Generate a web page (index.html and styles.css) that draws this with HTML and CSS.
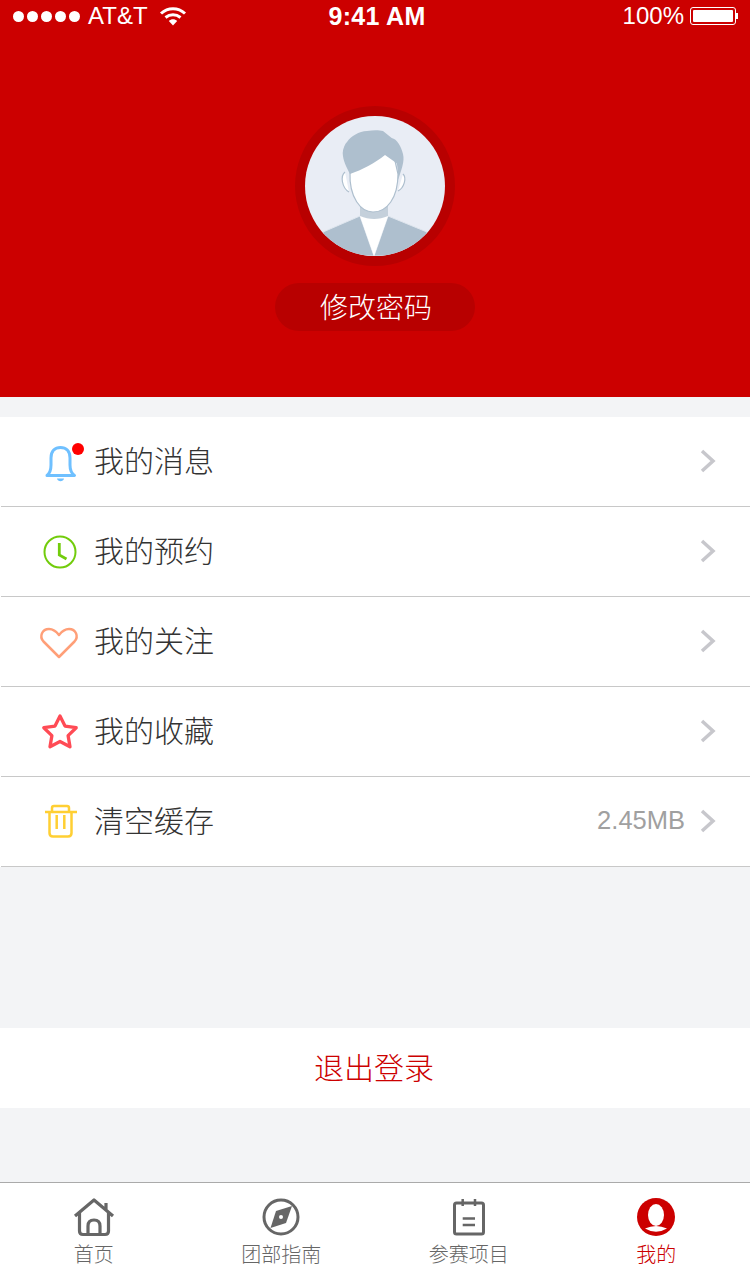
FILE: index.html
```html
<!DOCTYPE html>
<html lang="zh-CN">
<head>
    <meta charset="UTF-8">
    <meta name="viewport" content="width=device-width, initial-scale=1.0">
    <title>我的</title>
    <link rel="stylesheet" href="styles.css">
</head>
<body>

    <header class="profile">
        <div class="status-bar">
            <div class="status-left">
                <span class="signal"><i></i><i></i><i></i><i></i><i></i></span>
                <span class="carrier">AT&amp;T</span>
                <svg class="wifi" width="28" height="20" viewBox="0 0 28 20">
                    <path d="M2 7.5C9 1 19 1 26 7.5" fill="none" stroke="#fff" stroke-width="3"/>
                    <path d="M6.5 11.5C11 7.8 17 7.8 21.5 11.5" fill="none" stroke="#fff" stroke-width="3"/>
                    <path d="M9.8 15L14 19.5L18.2 15C15.8 12.8 12.2 12.8 9.8 15Z" fill="#fff"/>
                </svg>
            </div>
            <div class="status-time">9:41 AM</div>
            <div class="status-right">
                <span>100%</span>
                <span class="battery"><b></b></span>
                <span class="battery-tip"></span>
            </div>
        </div>

        <div class="avatar-ring">
            <svg class="avatar" width="140" height="140" viewBox="0 0 140 140">
                <rect width="140" height="140" fill="#e9edf5"/>
                <path d="M18 116L55 100L69 140L83 100L122 116L122 140L18 140Z" fill="#aebfce" stroke="#dfe6ee" stroke-width="1"/>
                <path d="M55 100L83 100L69 140Z" fill="#fff"/>
                <path d="M55 90V100C64 104 74 104 83 100V90Z" fill="#c4d0db"/>
                <path d="M40 56C35 60 37 72 44 76" fill="#fff" stroke="#aebfce" stroke-width="1.2"/>
                <path d="M98 58C102 62 99 72 93 75" fill="#fff" stroke="#aebfce" stroke-width="1.2"/>
                <path d="M45 56C44 82 56 96 68 96C82 96 93 82 93 58L88 36L50 44Z" fill="#fff" stroke="#aebfce" stroke-width="1.2"/>
                <path d="M45 58C41 50 38 45 37.7 37C38 32 40 28 42 26C46 20 54 15.500 62 15C68 14 74 14 78 15L86.700 22C92 23 96 30 98 38C100 46 96 54 93.300 64C93 56 92.500 50 91.700 47.300L80 39C70 47 57 54 45 58Z" fill="#aebfce"/>
            </svg>
        </div>

        <a class="pill">修改密码</a>
    </header>

    <ul class="menu">
        <li class="menu-row">
            <svg class="menu-icon" width="60" height="60" viewBox="0 0 60 60">
                <path d="M17 43.5C20 41 21 38 21 33V26C21 19 25 15.5 30.5 15.5C36 15.5 40 19 40 26V33C40 38 41 41 44.500 43.500Z" fill="none" stroke="#6fc0ff" stroke-width="3" stroke-linejoin="round"/>
                <path d="M27 46.500H34C33.500 50 27.500 50 27 46.500Z" fill="#6fc0ff"/>
                <circle cx="48" cy="17" r="6" fill="#f00"/>
            </svg>
            <span class="menu-label">我的消息</span>
            <svg class="chevron" width="16" height="24" viewBox="0 0 16 24"><path d="M2 2L13 12L2 22" fill="none" stroke="#c7c7cc" stroke-width="3.500"/></svg>
        </li>
        <li class="menu-row">
            <svg class="menu-icon" width="60" height="60" viewBox="0 0 60 60">
                <circle cx="30" cy="30" r="15.500" fill="none" stroke="#72cc0c" stroke-width="2"/>
                <path d="M29.300 21V33L36.500 37" fill="none" stroke="#72cc0c" stroke-width="2.800"/>
            </svg>
            <span class="menu-label">我的预约</span>
            <svg class="chevron" width="16" height="24" viewBox="0 0 16 24"><path d="M2 2L13 12L2 22" fill="none" stroke="#c7c7cc" stroke-width="3.500"/></svg>
        </li>
        <li class="menu-row">
            <svg class="menu-icon" width="60" height="60" viewBox="0 0 60 60">
                <path d="M29 45L13.500 29.500C9 24.500 12 17 19 17C23 17 26 19 29 23C32 19 35 17 39 17C46 17 49 24.500 44.500 29.500Z" fill="none" stroke="#ff9f78" stroke-width="2.500" stroke-linejoin="round"/>
            </svg>
            <span class="menu-label">我的关注</span>
            <svg class="chevron" width="16" height="24" viewBox="0 0 16 24"><path d="M2 2L13 12L2 22" fill="none" stroke="#c7c7cc" stroke-width="3.500"/></svg>
        </li>
        <li class="menu-row">
            <svg class="menu-icon" width="60" height="60" viewBox="0 0 60 60">
                <path d="M30 14L35 24.100L46.200 25.700L38.100 33.600L40 44.800L30 39.500L20 44.800L21.900 33.600L13.800 25.700L25 24.100Z" fill="none" stroke="#ff4b55" stroke-width="3.300" stroke-linejoin="round"/>
            </svg>
            <span class="menu-label">我的收藏</span>
            <svg class="chevron" width="16" height="24" viewBox="0 0 16 24"><path d="M2 2L13 12L2 22" fill="none" stroke="#c7c7cc" stroke-width="3.500"/></svg>
        </li>
        <li class="menu-row">
            <svg class="menu-icon" width="60" height="60" viewBox="0 0 60 60">
                <path d="M15 20H47M22 19V16Q22 14 24 14H37Q39 14 39 16V19M19.500 20V41Q19.500 44.500 23 44.500H38Q41.500 44.500 41.500 41V20M26.700 23V37M34.300 23V37" fill="none" stroke="#ffcf33" stroke-width="2.500"/>
            </svg>
            <span class="menu-label">清空缓存</span>
            <span class="menu-value">2.45MB</span>
            <svg class="chevron" width="16" height="24" viewBox="0 0 16 24"><path d="M2 2L13 12L2 22" fill="none" stroke="#c7c7cc" stroke-width="3.500"/></svg>
        </li>
    </ul>

    <button class="logout">退出登录</button>

    <nav class="tabbar">
        <a class="tab">
            <svg width="50" height="44" viewBox="0 0 50 44">
                <path d="M6 21L25 5L44 21M37 8V15M10.500 18V36Q10.500 39.500 14 39.500H36Q39.500 39.500 39.500 36V18M19 39V31Q19 25 25 25Q31 25 31 31V39" fill="none" stroke="#666" stroke-width="3.200" stroke-linejoin="round"/>
            </svg>
            <span>首页</span>
        </a>
        <a class="tab">
            <svg width="50" height="44" viewBox="0 0 50 44">
                <circle cx="25" cy="22" r="17" fill="none" stroke="#666" stroke-width="3"/>
                <path d="M36 11L30 28L14.500 33L20 16Z" fill="#666"/>
                <circle cx="25" cy="22" r="2" fill="#fff"/>
            </svg>
            <span>团部指南</span>
        </a>
        <a class="tab">
            <svg width="50" height="44" viewBox="0 0 50 44">
                <rect x="10.500" y="8" width="29" height="31" rx="2" fill="none" stroke="#666" stroke-width="3"/>
                <path d="M18.700 4V11M31 4V11" fill="none" stroke="#666" stroke-width="2.500"/>
                <path d="M18.700 23.500H31M18.700 30H31" fill="none" stroke="#666" stroke-width="2.500"/>
            </svg>
            <span>参赛项目</span>
        </a>
        <a class="tab tab-active">
            <svg width="50" height="44" viewBox="0 0 50 44">
                <circle cx="25" cy="22" r="19" fill="#c00"/>
                <ellipse cx="25" cy="20" rx="8" ry="11" fill="#fff"/>
                <path d="M14 33.500Q25 28.500 36 33.500Q25 40 14 33.500Z" fill="#fff"/>
            </svg>
            <span>我的</span>
        </a>
    </nav>

</body>
</html>
```

FILE: styles.css
```css
* {
    box-sizing: border-box;
}
body {
    margin: 0;
    height: 1280px;
    overflow: hidden;
    display: flex;
    flex-direction: column;
    background: #f3f4f6;
    font-family: "Noto Sans CJK SC", sans-serif;
}
.profile {
    height: 397px;
    background: #cc0000;
    display: flex;
    flex-direction: column;
    align-items: center;
    color: white;
}
.status-bar {
    width: 100%;
    height: 32px;
    padding: 0 13px;
    display: grid;
    grid-template-columns: 1fr auto 1fr;
    align-items: center;
    font-family: "Liberation Sans", sans-serif;
    font-size: 24px;
    line-height: 32px;
}
.status-left {
    display: flex;
    align-items: center;
}
.signal {
    display: flex;
    gap: 3px;
}
.signal i {
    width: 11px;
    height: 11px;
    border-radius: 50%;
    background: white;
}
.carrier {
    margin-left: 8px;
}
.wifi {
    margin-left: 11px;
}
.status-time {
    margin-left: 4px;
    font-size: 25px;
    font-weight: bold;
    letter-spacing: 0.300px;
}
.status-right {
    display: flex;
    align-items: center;
    justify-content: flex-end;
}
.battery {
    width: 46px;
    height: 18px;
    margin-left: 6px;
    padding: 2px;
    border: 1px solid white;
    border-radius: 3px;
}
.battery b {
    display: block;
    height: 100%;
    background: white;
    border-radius: 1px;
}
.battery-tip {
    width: 2px;
    height: 6px;
    background: white;
    margin-right: -1px;
}
.avatar-ring {
    width: 160px;
    height: 160px;
    margin-top: 74px;
    padding: 10px;
    border-radius: 50%;
    background: #b80000;
}
.avatar {
    display: block;
    border-radius: 50%;
}
.pill {
    width: 200px;
    height: 48px;
    margin-top: 17px;
    padding: 0 0 2px 2px;
    border-radius: 24px;
    background: #b80000;
    font-size: 28px;
    font-weight: 300;
    line-height: 46px;
    text-align: center;
}
.menu {
    list-style: none;
    margin: 20px 0 0;
    padding: 0 0 0 1px;
    background: white;
}
.menu-row {
    height: 90px;
    padding: 0 34px 0 29px;
    display: flex;
    align-items: center;
    border-bottom: 1px solid #c8c8c8;
}
.menu-icon {
    margin-right: 4px;
    flex-shrink: 0;
}
.menu-label {
    flex: 1;
    padding-bottom: 5px;
    font-size: 30px;
    font-weight: 300;
    color: #333;
}
.menu-value {
    margin-right: 15px;
    padding-bottom: 3px;
    font-family: "Liberation Sans", sans-serif;
    font-size: 25.500px;
    color: #a0a0a0;
}
.chevron {
    margin-bottom: 2px;
}
.logout {
    display: block;
    width: 100%;
    height: 80px;
    margin-top: 161px;
    border: none;
    background: white;
    color: #cc0000;
    font-family: inherit;
    font-size: 30px;
    font-weight: 300;
    padding: 0 2px 4px 0;
}
.tabbar {
    height: 98px;
    margin-top: auto;
    padding-top: 12px;
    display: flex;
    background: #fff;
    border-top: 1px solid #aaa;
}
.tab {
    flex: 1;
    display: flex;
    flex-direction: column;
    align-items: center;
    color: #666;
    font-size: 20px;
    font-weight: 300;
    line-height: 30px;
}
.tab svg {
    display: block;
}
.tab-active {
    color: #cc0000;
}
```
